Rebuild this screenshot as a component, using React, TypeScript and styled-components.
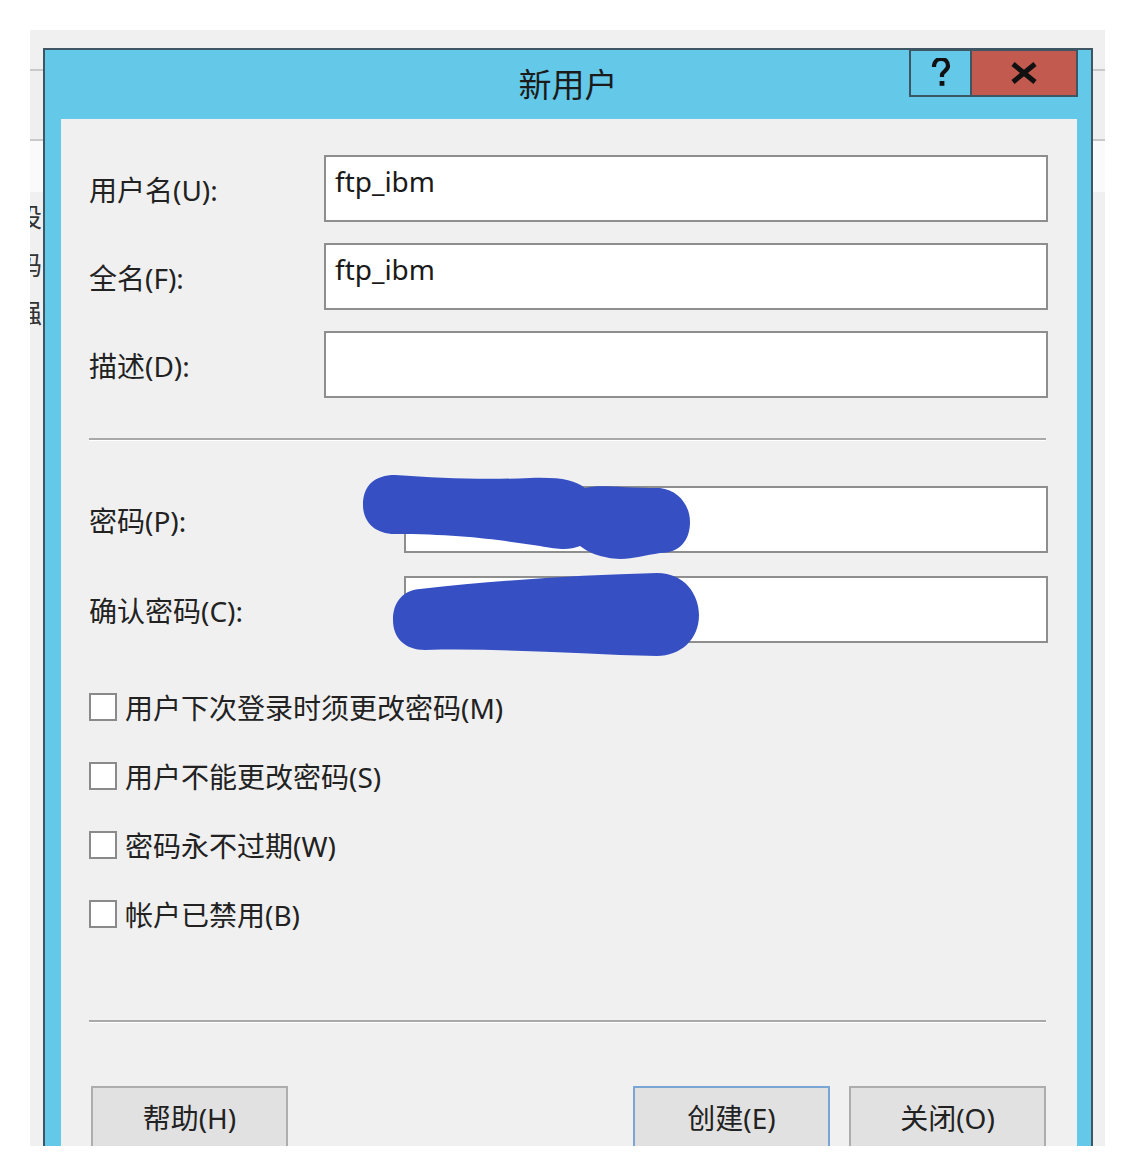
import React from "react";
import styled, { createGlobalStyle } from "styled-components";

const GlobalStyle = createGlobalStyle`
  html, body {
    margin: 0;
    padding: 0;
    background: #ffffff;
  }
  body {
    font-family: "Noto Sans", "Noto Sans CJK SC", sans-serif;
    color: #1e1e1e;
  }
`;

const Page = styled.div`
  position: relative;
  width: 1135px;
  height: 1176px;
  overflow: hidden;
`;

/* the window behind the dialog */
const Backdrop = styled.div`
  margin: 30px 30px 0 30px;
  height: 1116px;
  display: flex;
  align-items: flex-start;
  padding-top: 18px;
  box-sizing: border-box;
  overflow: hidden;
  background: linear-gradient(
    to bottom,
    #f0f0f0 0,
    #f0f0f0 39px,
    #c9c9c9 39px,
    #c9c9c9 41px,
    #efefef 41px,
    #efefef 109px,
    #c9c9c9 109px,
    #c9c9c9 111px,
    #fafafa 111px,
    #fafafa 162px,
    #f0f0f0 162px
  );
`;

const SideStrip = styled.div<{ $w: number }>`
  width: ${(p) => p.$w}px;
  flex: none;
  overflow: hidden;
  align-self: stretch;
`;

const HiddenText = styled.div`
  margin-left: -14px;
  padding-top: 144px;
  display: flex;
  flex-direction: column;
  font-family: "Noto Sans CJK SC", sans-serif;
  font-size: 26px;
  line-height: 48px;
  color: #333;
`;

const Dialog = styled.div`
  width: 1050px;
  flex: none;
  height: 1200px;
  box-sizing: border-box;
  background: #64c8e9;
  border: 2px solid #3e5563;
  border-bottom: none;
  display: flex;
  flex-direction: column;
`;

const TitleBar = styled.div`
  height: 69px;
  display: grid;
  grid-template-columns: 1fr auto 1fr;
`;

const Title = styled.div`
  grid-column: 2;
  align-self: center;
  font-family: "Noto Sans CJK SC", sans-serif;
  font-size: 33px;
  color: #1b1b1b;
  margin-top: -4px;
`;

const CaptionButtons = styled.div`
  grid-column: 3;
  justify-self: end;
  align-self: start;
  display: flex;
  margin-right: 13px;
  margin-top: -1px;
`;

const CaptionButton = styled.div<{ $w: number; $bg: string }>`
  width: ${(p) => p.$w}px;
  height: 48px;
  box-sizing: border-box;
  background: ${(p) => p.$bg};
  border: 2px solid #3e5563;
  display: flex;
  align-items: center;
  justify-content: center;
  & + & {
    border-left: none;
  }
`;

const Panel = styled.div`
  flex: 1;
  margin: 0 14px 0 16px;
  background: #f0f0f0;
  padding: 36px 29px 0 28px;
  display: flex;
  flex-direction: column;
`;

const FieldGroup = styled.div<{ $gap: number }>`
  display: flex;
  flex-direction: column;
  gap: ${(p) => p.$gap}px;
`;

const FieldRow = styled.div<{ $label: number }>`
  display: grid;
  grid-template-columns: ${(p) => p.$label}px 1fr;
  align-items: center;
`;

const Label = styled.div`
  font-size: 28px;
  color: #222;
`;

const Input = styled.div`
  height: 67px;
  box-sizing: border-box;
  background: #ffffff;
  border: 2px solid #8e8e8e;
  padding: 6px 9px;
  font-family: "Noto Sans", sans-serif;
  font-size: 28px;
  line-height: 36px;
  color: #1a1a1a;
`;

const Separator = styled.div<{ $top: number; $bottom: number }>`
  height: 2px;
  background: #a9a9a9;
  margin: ${(p) => p.$top}px 2px ${(p) => p.$bottom}px 0;
  box-shadow: 0 1px 0 #ffffff;
`;

const CheckList = styled.div`
  display: flex;
  flex-direction: column;
  gap: 41px;
  margin-top: 50px;
`;

const CheckRow = styled.label`
  display: flex;
  align-items: center;
  height: 28px;
  gap: 8px;
  font-size: 28px;
  color: #222;
`;

const Box = styled.span`
  width: 28px;
  height: 28px;
  box-sizing: border-box;
  border: 2px solid #8a8a8a;
  background: #ffffff;
  flex: none;
`;

const ButtonRow = styled.div`
  display: flex;
  gap: 19px;
  padding: 0 2px 0 2px;
`;

const Spacer = styled.div`
  flex: 1;
`;

const PushButton = styled.div<{ $primary?: boolean }>`
  width: 197px;
  height: 62px;
  box-sizing: border-box;
  background: #e1e1e1;
  border: 2px solid ${(p) => (p.$primary ? "#7aa6d6" : "#adadad")};
  display: flex;
  align-items: center;
  justify-content: center;
  font-size: 28px;
  color: #222;
`;

const Redaction = styled.svg`
  position: absolute;
  left: 0;
  top: 0;
  pointer-events: none;
`;

const checks = [
  "用户下次登录时须更改密码(M)",
  "用户不能更改密码(S)",
  "密码永不过期(W)",
  "帐户已禁用(B)",
];

const App: React.FC = () => {
  return (
    <Page>
      <GlobalStyle />
      <Backdrop>
        <SideStrip $w={13}>
          <HiddenText>
            <span>设</span>
            <span>码</span>
            <span>强</span>
          </HiddenText>
        </SideStrip>
        <Dialog>
          <TitleBar>
            <Title>新用户</Title>
            <CaptionButtons>
              <CaptionButton $w={63} $bg="#64c8e9">
                <svg width="20" height="30" viewBox="0 0 20 30">
                  <path
                    d="M3 9 C3 3 7 1 10 1 C14 1 17 3.5 17 8 C17 12 12 13.5 11 16.5 L11 19"
                    fill="none"
                    stroke="#111"
                    strokeWidth="4.2"
                  />
                  <rect x="8.6" y="23" width="4.8" height="4.8" fill="#111" />
                </svg>
              </CaptionButton>
              <CaptionButton $w={106} $bg="#c35a4f">
                <svg width="28" height="22" viewBox="0 0 28 22">
                  <path d="M3 2 L25 20 M25 2 L3 20" stroke="#111" strokeWidth="5" />
                </svg>
              </CaptionButton>
            </CaptionButtons>
          </TitleBar>
          <Panel>
            <FieldGroup $gap={21}>
              <FieldRow $label={235}>
                <Label>用户名(U):</Label>
                <Input>ftp_ibm</Input>
              </FieldRow>
              <FieldRow $label={235}>
                <Label>全名(F):</Label>
                <Input>ftp_ibm</Input>
              </FieldRow>
              <FieldRow $label={235}>
                <Label>描述(D):</Label>
                <Input />
              </FieldRow>
            </FieldGroup>
            <Separator $top={40} $bottom={46} />
            <FieldGroup $gap={23}>
              <FieldRow $label={315}>
                <Label>密码(P):</Label>
                <Input />
              </FieldRow>
              <FieldRow $label={315}>
                <Label>确认密码(C):</Label>
                <Input />
              </FieldRow>
            </FieldGroup>
            <CheckList>
              {checks.map((c) => (
                <CheckRow key={c}>
                  <Box />
                  {c}
                </CheckRow>
              ))}
            </CheckList>
            <Separator $top={92} $bottom={64} />
            <ButtonRow>
              <PushButton>帮助(H)</PushButton>
              <Spacer />
              <PushButton $primary>创建(E)</PushButton>
              <PushButton>关闭(O)</PushButton>
            </ButtonRow>
          </Panel>
        </Dialog>
        <SideStrip $w={12} />
      </Backdrop>
      <Redaction width="1135" height="1176" viewBox="0 0 1135 1176">
        <path
          fill="#3650c4"
          d="M363 505 C363 485 375 475 395 475 C440 478 480 480 530 478 C560 477 575 480 585 488 C600 484 620 488 660 488 C678 490 690 505 690 522 C690 540 680 553 660 553 C640 556 625 562 605 557 C595 555 588 552 580 546 C570 550 560 550 540 546 C500 540 460 534 395 534 C375 534 363 522 363 505 Z"
        />
        <path
          fill="#3650c4"
          d="M393 620 C393 600 405 590 420 589 C500 580 580 575 657 573 C685 573 699 595 699 615 C699 640 680 656 657 656 C580 654 500 648 425 650 C405 650 393 638 393 620 Z"
        />
      </Redaction>
    </Page>
  );
};

export default App;
